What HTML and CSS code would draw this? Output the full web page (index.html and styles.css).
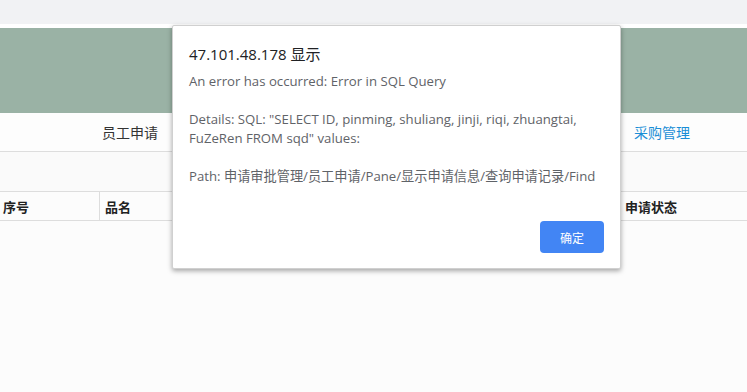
FILE: index.html
```html
<!DOCTYPE html>
<html lang="zh">
<head>
<meta charset="utf-8">
<link rel="stylesheet" href="styles.css">
</head>
<body>
<div class="topbar"></div>
<div class="gap"></div>
<div class="header"></div>
<div class="nav">
  <span class="nav-item">员工申请</span>
  <span class="nav-item active">采购管理</span>
</div>
<div class="toolbar"></div>
<div class="thead">
  <div class="th c1">序号</div>
  <div class="th c2">品名</div>
  <div class="th c3"></div>
  <div class="th c4">申请状态</div>
</div>
<div class="rest"></div>

<div class="dialog">
  <div class="title">47.101.48.178 显示</div>
  <div class="msg">An error has occurred: Error in SQL Query<br><br>Details: SQL: "SELECT ID, pinming, shuliang, jinji, riqi, zhuangtai, FuZeRen FROM sqd" values:<br><br>Path: 申请审批管理/员工申请/Pane/显示申请信息/查询申请记录/Find</div>
  <div class="actions"><button class="ok">确定</button></div>
</div>
</body>
</html>
```
FILE: styles.css
```css
html, body { margin: 0; padding: 0; }
body {
  width: 747px;
  height: 392px;
  overflow: hidden;
  background: #fcfcfc;
  font-family: "Open Sans", "Noto Sans CJK SC", sans-serif;
  position: relative;
}
.topbar { height: 24px; background: #f1f2f4; }
.gap { height: 4px; background: #ffffff; }
.header { height: 85px; background: #9ab2a5; }
.nav {
  height: 38px;
  background: #fdfdfd;
  border-bottom: 1px solid #dddddd;
  display: flex;
  align-items: center;
  font-size: 14px;
}
.nav-item { color: #333333; }
.nav-item:first-child { margin-left: 102px; }
.nav-item.active { color: #1a8ed6; margin-left: auto; margin-right: 57px; }
.toolbar { height: 39px; background: #fafafa; border-bottom: 1px solid #dddddd; }
.thead {
  height: 28px;
  display: flex;
  border-bottom: 1px solid #dddddd;
  background: #fcfcfc;
}
.th {
  font-size: 13px;
  font-weight: bold;
  color: #222222;
  display: flex;
  align-items: center;
  box-sizing: border-box;
  border-right: 1px solid #dddddd;
}
.c1 { width: 100px; padding-left: 3px; }
.c2 { width: 420px; padding-left: 5px; }
.c3 { width: 100px; }
.c4 { flex: 1; padding-left: 5px; border-right: none; }

.dialog {
  position: absolute;
  left: 172px;
  top: 25px;
  width: 449px;
  height: 244px;
  box-sizing: border-box;
  background: #ffffff;
  border: 1px solid #d0d0d0;
  border-radius: 2px;
  box-shadow: 0 2px 5px rgba(0, 0, 0, 0.35);
  padding: 18px 16px 15px 16px;
  display: flex;
  flex-direction: column;
}
.title {
  font-size: 15px;
  color: #202124;
  line-height: 20px;
}
.msg {
  margin-top: 8px;
  font-size: 13.2px;
  line-height: 19px;
  color: #5f6368;
}
.actions {
  margin-top: auto;
  display: flex;
  justify-content: flex-end;
}
.ok {
  width: 64px;
  height: 32px;
  background: #4285f4;
  color: #ffffff;
  border: none;
  border-radius: 4px;
  font-size: 12px;
  font-family: "Noto Sans CJK SC", sans-serif;
}
```
